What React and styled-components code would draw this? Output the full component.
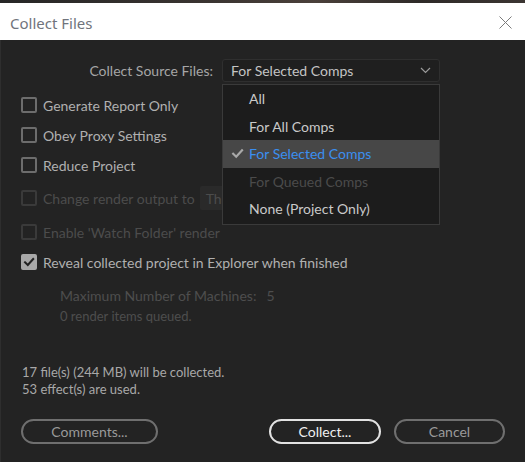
import React from "react";
import styled, { createGlobalStyle } from "styled-components";

const GlobalStyle = createGlobalStyle`
  html, body {
    margin: 0;
    padding: 0;
    background: #232323;
  }
  body {
    font-family: "Lato", "Noto Sans", sans-serif;
  }
`;

const sourceOptions = [
  { label: "All" },
  { label: "For All Comps" },
  { label: "For Selected Comps", selected: true },
  { label: "For Queued Comps", disabled: true },
  { label: "None (Project Only)" },
];

const CheckIcon = ({ color = "#222", size = 12 }) => (
  <svg width={size} height={size} viewBox="0 0 12 12">
    <path
      d="M2 6.3 L4.8 9 L10.2 3"
      fill="none"
      stroke={color}
      strokeWidth="2"
      strokeLinecap="square"
    />
  </svg>
);

const Checkbox = ({ checked, disabled, label, children, ...rest }) => (
  <CheckRow {...rest}>
    <Box checked={checked} disabled={disabled}>
      {checked && <CheckIcon />}
    </Box>
    <CheckLabel disabled={disabled}>{label}</CheckLabel>
    {children}
  </CheckRow>
);

const App = () => {
  return (
    <>
      <GlobalStyle />
      <Window>
        <Backdrop />
        <TitleBar>
          <Title>Collect Files</Title>
          <CloseButton>
            <svg width="13" height="13" viewBox="0 0 13 13">
              <path d="M0.5 0.5 L12.5 12.5 M12.5 0.5 L0.5 12.5" stroke="#7b7b7b" strokeWidth="1" />
            </svg>
          </CloseButton>
        </TitleBar>
        <Body>
          <SourceRow>
            <SourceLabel>Collect Source Files:</SourceLabel>
            <SelectWrap>
              <Select>
                <span>For Selected Comps</span>
                <svg width="11" height="7" viewBox="0 0 11 7">
                  <path d="M1 1 L5.5 5.5 L10 1" fill="none" stroke="#9a9a9a" strokeWidth="1.2" />
                </svg>
              </Select>
              <Menu>
                {sourceOptions.map((opt) => (
                  <MenuItem key={opt.label} selected={opt.selected} disabled={opt.disabled}>
                    <MenuCheck>{opt.selected && <CheckIcon color="#a9a9a9" size={13} />}</MenuCheck>
                    {opt.label}
                  </MenuItem>
                ))}
              </Menu>
            </SelectWrap>
          </SourceRow>

          <Options>
            <Checkbox label="Generate Report Only" />
            <Checkbox label="Obey Proxy Settings" />
            <Checkbox label="Reduce Project" />
            <Checkbox label="Change render output to" disabled offset={3}>
              <OutputField>Th</OutputField>
            </Checkbox>
            <Checkbox label="Enable 'Watch Folder' render" disabled offset={4} />
            <Checkbox label="Reveal collected project in Explorer when finished" checked />
          </Options>

          <Machines>
            <MachinesRow>
              <span>Maximum Number of Machines:</span>
              <MachinesValue>5</MachinesValue>
            </MachinesRow>
            <Queued>0 render items queued.</Queued>
          </Machines>

          <Summary>
            <div>17 file(s) (244 MB) will be collected.</div>
            <div>53 effect(s) are used.</div>
          </Summary>

          <Footer>
            <PillButton width={137}>Comments...</PillButton>
            <Spacer />
            <PillButton width={112} primary>
              Collect...
            </PillButton>
            <PillButton width={111}>Cancel</PillButton>
          </Footer>
        </Body>
      </Window>
    </>
  );
};

const Window = styled.div`
  width: 525px;
  height: 462px;
  display: flex;
  flex-direction: column;
  background: #232323;
  overflow: hidden;
`;

const Backdrop = styled.div`
  height: 3px;
  background: linear-gradient(90deg, #262626 0%, #3a3431 40%, #4a403a 60%, #2e2a28 80%, #3b3532 100%);
`;

const TitleBar = styled.div`
  height: 37px;
  background: #ffffff;
  display: flex;
  align-items: center;
  justify-content: space-between;
  padding: 0 13px 0 10px;
`;

const Title = styled.div`
  font-family: "Noto Sans", "Open Sans", sans-serif;
  font-size: 15px;
  color: #70747c;
  margin-top: 2px;
`;

const CloseButton = styled.div`
  display: flex;
  align-items: center;
  margin-top: 2px;
`;

const Body = styled.div`
  flex: 1;
  display: flex;
  flex-direction: column;
  padding: 19px 20px 0 20px;
  border-left: 1px solid #2e2e2e;
  color: #b0b0b0;
  font-size: 14px;
`;

const SourceRow = styled.div`
  display: flex;
  align-items: center;
  height: 23px;
  padding-left: 68px;
`;

const SourceLabel = styled.div`
  width: 124px;
  text-align: right;
  margin-right: 9px;
  color: #a6a6a6;
`;

const SelectWrap = styled.div`
  position: relative;
  width: 218px;
  height: 23px;
`;

const Select = styled.div`
  box-sizing: border-box;
  height: 23px;
  display: flex;
  align-items: center;
  justify-content: space-between;
  padding: 0 8px 0 8px;
  background: #1f1f1f;
  border: 1px solid #2f2f2f;
  border-radius: 3px;
  color: #c4c4c4;
`;

const Menu = styled.div`
  position: absolute;
  top: 25px;
  left: 0;
  width: 218px;
  box-sizing: border-box;
  background: #1c1c1c;
  border: 1px solid #3a3a3a;
  z-index: 5;
  display: flex;
  flex-direction: column;
  padding: 0 0 1px 0;
`;

const MenuItem = styled.div`
  height: 27.5px;
  display: flex;
  align-items: center;
  color: ${(p) => (p.selected ? "#3b8ff0" : p.disabled ? "#4b4b4b" : "#c9c9c9")};
  background: ${(p) => (p.selected ? "#474747" : "transparent")};
`;

const MenuCheck = styled.span`
  width: 24px;
  display: flex;
  justify-content: center;
  padding-left: 2px;
`;

const Options = styled.div`
  display: flex;
  flex-direction: column;
  margin-top: 8px;
`;

const CheckRow = styled.div`
  display: flex;
  align-items: center;
  height: 30px;
  margin-top: ${(p) => p.offset || 0}px;
`;

const Box = styled.span`
  box-sizing: border-box;
  width: 16px;
  height: 16px;
  margin-right: 6px;
  border-radius: 2px;
  display: flex;
  align-items: center;
  justify-content: center;
  border: 2px solid ${(p) => (p.checked ? "#a8a8a8" : p.disabled ? "#3a3a3a" : "#6d6d6d")};
  background: ${(p) => (p.checked ? "#a8a8a8" : "transparent")};
`;

const CheckLabel = styled.span`
  color: ${(p) => (p.disabled ? "#4c4c4c" : "#b0b0b0")};
`;

const OutputField = styled.span`
  margin-left: 5px;
  height: 24px;
  width: 60px;
  box-sizing: border-box;
  padding-left: 6px;
  display: flex;
  align-items: center;
  background: #2a2a2a;
  border-radius: 2px;
  color: #4c4c4c;
`;

const Machines = styled.div`
  display: flex;
  flex-direction: column;
  padding-left: 39px;
  margin-top: 8px;
  color: #4e4e4e;
`;

const MachinesRow = styled.div`
  display: flex;
  align-items: center;
  height: 20px;
`;

const MachinesValue = styled.span`
  margin-left: 10px;
`;

const Queued = styled.div`
  font-size: 13px;
  height: 20px;
  display: flex;
  align-items: center;
  margin-top: 1px;
`;

const Summary = styled.div`
  margin-top: 38px;
  font-size: 13px;
  line-height: 17px;
  color: #a8a8a8;
  padding-left: 1px;
`;

const Footer = styled.div`
  display: flex;
  align-items: center;
  gap: 13px;
  margin-top: 21px;
`;

const Spacer = styled.div`
  flex: 1;
`;

const PillButton = styled.button`
  box-sizing: border-box;
  width: ${(p) => p.width}px;
  height: 25px;
  border-radius: 13px;
  background: transparent;
  border: 2px solid ${(p) => (p.primary ? "#e2e2e2" : "#6f6f6f")};
  color: ${(p) => (p.primary ? "#f0f0f0" : "#9a9a9a")};
  font-family: "Lato", "Noto Sans", sans-serif;
  font-size: 14px;
  padding: 0;
`;

export default App;
